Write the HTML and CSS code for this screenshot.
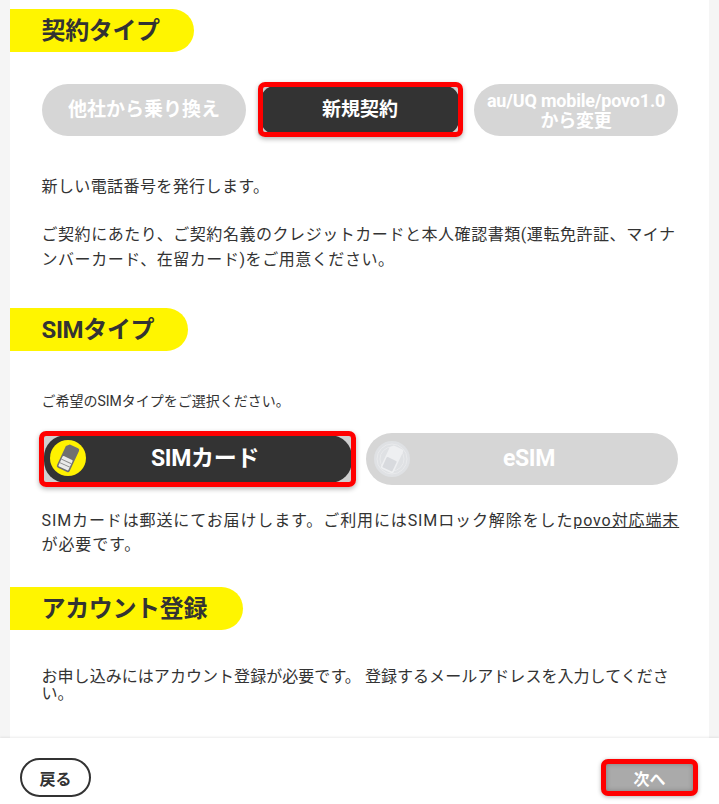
FILE: index.html
```html
<!DOCTYPE html>
<html lang="ja">
<head>
<meta charset="utf-8">
<title>povo</title>
<link rel="stylesheet" href="styles.css">
</head>
<body>
<div class="page">
  <main class="main">
    <h2 class="pill pill-contract">契約タイプ</h2>
    <div class="choices">
      <div class="choice">他社から乗り換え</div>
      <div class="choice selected mark-a"><span class="face">新規契約</span></div>
      <div class="choice small">au/UQ mobile/povo1.0<br>から変更</div>
    </div>
    <p class="text t1">新しい電話番号を発行します。</p>
    <p class="text t2">ご契約にあたり、ご契約名義のクレジットカードと本人確認書類(運転免許証、マイナンバーカード、在留カード)をご用意ください。</p>

    <h2 class="pill pill-sim">SIMタイプ</h2>
    <p class="note">ご希望のSIMタイプをご選択ください。</p>
    <div class="sims">
      <div class="choice selected mark-b sim">
        <span class="face">
          <svg class="sim-icon" viewBox="0 0 36 36" aria-hidden="true">
            <circle cx="18" cy="18" r="18" fill="#fff200"/>
            <g transform="rotate(25 18 18)">
              <path d="M14 5h9a2 2 0 0 1 2 2v22a2 2 0 0 1-2 2H13a2 2 0 0 1-2-2V8z" fill="#707070"/>
              <rect x="12.5" y="18" width="11" height="11.5" rx="1" fill="#eaeaea"/>
              <path d="M12.5 21.8h11M12.5 25.6h11" stroke="#8a8a8a" stroke-width=".9"/>
            </g>
          </svg>
          SIMカード
        </span>
      </div>
      <div class="choice sim">
        <svg class="sim-icon" viewBox="0 0 36 36" aria-hidden="true">
          <circle cx="18" cy="18" r="18" fill="#dfe1e4"/>
          <circle cx="18" cy="18" r="15" fill="none" stroke="#e9eaec" stroke-width="1"/>
          <circle cx="18" cy="18" r="12" fill="none" stroke="#e9eaec" stroke-width="1"/>
          <g transform="rotate(25 18 18)">
            <path d="M14 5h9a2 2 0 0 1 2 2v22a2 2 0 0 1-2 2H13a2 2 0 0 1-2-2V8z" fill="#eeeff1"/>
            <rect x="12.5" y="18" width="11" height="11.5" rx="1" fill="#d8dade"/>
          </g>
        </svg>
        eSIM
      </div>
    </div>
    <p class="text t3">SIMカードは郵送にてお届けします。ご利用にはSIMロック解除をした<a class="link" href="#">povo対応端末</a><br>が必要です。</p>

    <h2 class="pill pill-account">アカウント登録</h2>
    <p class="text t4">お申し込みにはアカウント登録が必要です。 登録するメールアドレスを入力してください。</p>
  </main>
  <footer class="footer">
    <a class="back" href="#">戻る</a>
    <a class="next" href="#">次へ</a>
  </footer>
</div>
</body>
</html>
```
FILE: styles.css
```css
* { box-sizing: border-box; }
html, body { margin: 0; height: 100%; overflow: hidden; }
body {
  font-family: Roboto, "Noto Sans CJK JP", sans-serif;
  color: #333;
  background: #fff;
}
.page { display: flex; flex-direction: column; height: 804px; }
.main {
  flex: 1;
  min-height: 0;
  overflow: hidden;
  margin: 0;
  padding: 9px 41px 0 10px;
  background: #fff;
  box-shadow: inset 10px 0 0 #f5f5f5, inset -10px 0 0 #f5f5f5;
}
.pill {
  margin: 0;
  height: 43px;
  padding-left: 31.5px;
  display: flex;
  align-items: center;
  background: #fff500;
  border-radius: 0 22px 22px 0;
  font-size: 24px;
  font-weight: 700;
  line-height: 1;
  letter-spacing: -.35px;
}
.pill-contract { width: 184px; }
.pill-sim { width: 178px; margin-top: 36px; }
.pill-account { width: 233px; margin-top: 30px; }
.choices {
  display: grid;
  grid-template-columns: repeat(3, 204px);
  gap: 12px;
  margin: 32px 0 0 32px;
}
.sims {
  display: grid;
  grid-template-columns: repeat(2, 312px);
  gap: 12px;
  margin: 22px 0 0 32px;
}
.choice {
  position: relative;
  height: 52px;
  display: flex;
  align-items: center;
  justify-content: center;
  border-radius: 26px;
  background: #d6d6d6;
  color: #fff;
  font-size: 19px;
  font-weight: 700;
  line-height: 1.1;
  text-align: center;
}
.choice.small { font-size: 18px; letter-spacing: -.2px; line-height: 20px; padding-top: 1px; }
.selected { border-radius: 4px; background: #cfcfcf; }
.face {
  position: absolute;
  inset: 0;
  display: flex;
  align-items: center;
  justify-content: center;
  background: #333;
  border-radius: 18px;
}
.selected::after {
  content: "";
  position: absolute;
  border: 5px solid #f00;
  border-radius: 7px;
  box-shadow: 0 2px 5px rgba(0,0,0,.3);
}
.mark-a::after { inset: -2px -1px -1px 0; }
.mark-a .face { inset: 2px 3px; border-radius: 14px; }
.mark-b::after { inset: -2px -2px -2px -3px; }
.mark-b .face { inset: 2px; border-radius: 22px; padding-left: 14px; }
.sim { font-size: 23px; letter-spacing: -.3px; }
.choice.sim:not(.selected) { padding-left: 14px; }
.sim-icon {
  position: absolute;
  left: 8px;
  top: 8px;
  width: 36px;
  height: 36px;
}
.mark-b .sim-icon { left: 6px; top: 5px; }
.text {
  margin: 0 0 0 31.5px;
  width: 637px;
  font-size: 16px;
  line-height: 25px;
}
.t1 { margin-top: 38px; letter-spacing: .4px; }
.t2 { margin-top: 23px; letter-spacing: .55px; }
.t3 { margin-top: 24px; width: 650px; letter-spacing: .89px; line-height: 24px; }
.t4 { margin-top: 38px; line-height: 17px; letter-spacing: .05px; }
.note { margin: 40px 0 0 31.5px; font-size: 14px; line-height: 20px; }
.link { color: inherit; text-decoration: underline; }
.footer {
  height: 66px;
  flex: none;
  position: relative;
  padding: 20px 21px 7px 20px;
  display: flex;
  justify-content: space-between;
  align-items: flex-start;
  background: #fff;
  box-shadow: 0 -1px 2px rgba(0,0,0,.08);
}
.back {
  width: 71px;
  height: 39px;
  border: 2px solid #333;
  border-radius: 20px;
  display: flex;
  align-items: center;
  justify-content: center;
  color: #333;
  font-size: 16px;
  font-weight: 700;
  text-decoration: none;
}
.next {
  width: 97px;
  height: 37px;
  margin-top: 1px;
  border: 5px solid #f00;
  border-radius: 7px;
  background: #aaa;
  box-shadow: 0 1px 4px rgba(0,0,0,.3), inset 0 0 5px rgba(0,0,0,.25);
  display: flex;
  align-items: center;
  justify-content: center;
  color: #fff;
  font-size: 16px;
  font-weight: 700;
  text-decoration: none;
}
```
